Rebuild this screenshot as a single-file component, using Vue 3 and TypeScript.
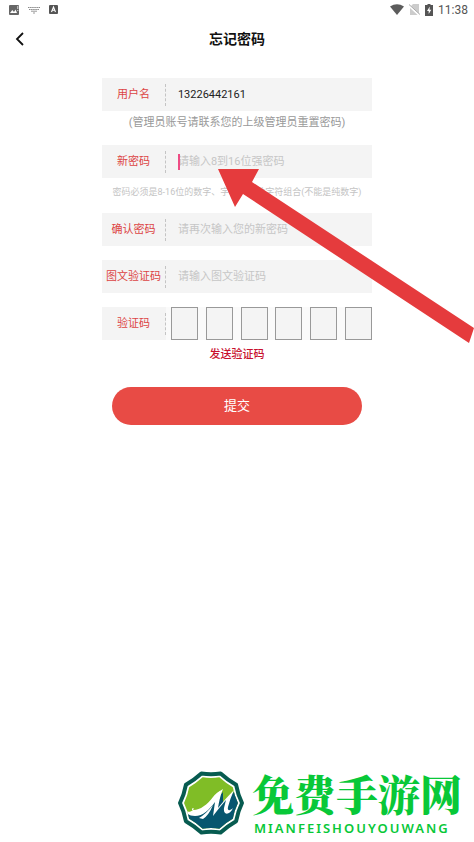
<script setup lang="ts">
import { ref } from 'vue'

interface Field {
  id: string
  label: string
  type: string
  placeholder: string
  hint?: string
  hintClass?: string
  caret?: boolean
}

const fields: Field[] = [
  { id: 'username', label: '用户名', type: 'text', placeholder: '', hint: '(管理员账号请联系您的上级管理员重置密码)', hintClass: 'note' },
  { id: 'password', label: '新密码', type: 'password', placeholder: '请输入8到16位强密码', hint: '密码必须是8-16位的数字、字母、特殊字符组合(不能是纯数字)', hintClass: 'rule', caret: true },
  { id: 'confirm', label: '确认密码', type: 'password', placeholder: '请再次输入您的新密码' },
  { id: 'captcha', label: '图文验证码', type: 'text', placeholder: '请输入图文验证码' },
]

const values = ref<Record<string, string>>({ username: '13226442161', password: '', confirm: '', captcha: '' })
const code = ref<string[]>(['', '', '', '', '', ''])
</script>

<template>
  <div class="page">
    <div class="status">
      <div class="status-side">
        <svg width="10" height="10" viewBox="0 0 10 10"><rect width="10" height="10" rx="1" fill="#666" /><path d="M1 8 3.300 5 5 7 6.500 4.500 8 8Z" fill="#fff" /><path d="M8.800 1v3M8.800 5v1" stroke="#fff" stroke-width=".8" /></svg>
        <svg width="12" height="8" viewBox="0 0 12 8"><path d="M0 1.500h12M1 3.500h10" stroke="#888" stroke-width="1.200" stroke-dasharray="1.500 .6" /><path d="M3 5.200h6M5 7h2" stroke="#999" /></svg>
        <svg width="9" height="9" viewBox="0 0 9 9"><rect width="9" height="9" rx="1" fill="#555" /><path d="M2.500 7 4.500 2l2 5M3.300 5.300h2.400" fill="none" stroke="#fff" stroke-width="1.100" /></svg>
      </div>
      <div class="status-side right">
        <svg width="14" height="11" viewBox="0 0 14 11"><path d="M0 2.500Q7-2.200 14 2.500L7 11Z" fill="#5c5c5c" /></svg>
        <svg width="11" height="11" viewBox="0 0 11 11"><path d="M4 0H10v11H1V3Z" fill="#ccc" /><path d="M0 1.500 10 11" stroke="#fff" stroke-width="2" /><path d="M0 .5 11 10.500" stroke="#aaa" /></svg>
        <svg width="8" height="12" viewBox="0 0 8 12"><path d="M2.500 0h3v1H8v11H0V1h2.500Z" fill="#555" /><path d="M4.800 2.500 2 7h1.700v3L6.300 5.800H4.500Z" fill="#fff" /></svg>
        <span class="clock">11:38</span>
      </div>
    </div>

    <header class="header">
      <button class="back" type="button" aria-label="返回">
        <svg width="9" height="14" viewBox="0 0 9 14"><path d="M8 1 2 7l6 6" fill="none" stroke="#111" stroke-width="1.800" /></svg>
      </button>
      <h1 class="title">忘记密码</h1>
    </header>

    <form class="form" @submit.prevent>
      <div v-for="f in fields" :key="f.id" class="group">
        <div class="row">
          <label class="label" :for="f.id">{{ f.label }}</label>
          <div class="control" :class="{ caret: f.caret }">
            <input :id="f.id" v-model="values[f.id]" class="input" :type="f.type" :placeholder="f.placeholder" />
          </div>
        </div>
        <p v-if="f.hint" class="hint" :class="f.hintClass">{{ f.hint }}</p>
      </div>

      <div class="row code-row">
        <label class="label" for="code-0">验证码</label>
        <div class="code">
          <input v-for="(_, i) in code" :id="`code-${i}`" :key="i" v-model="code[i]" class="digit" type="text" maxlength="1" :aria-label="`验证码 ${i + 1}`" />
        </div>
      </div>
      <button class="send" type="button">发送验证码</button>
      <button class="submit" type="submit">提交</button>
    </form>

    <svg class="pointer" width="256" height="174" viewBox="0 0 256 174" aria-hidden="true">
      <path d="M0 0H41L34 13 256 159 251 174 25 25 17 38Z" fill="#e53b3d" />
    </svg>

    <footer class="brand">
      <svg class="emblem" width="68" height="66" viewBox="0 0 68 66" aria-hidden="true">
        <defs>
          <path id="badge" d="M24.400 3.500Q34 4.800 43.600 3.500Q50.700 10 59.100 14.800Q60.800 24.300 65 33Q60.800 41.700 59.100 51.200Q50.700 56 43.600 62.500Q34 61.200 24.400 62.500Q17.300 56 8.900 51.200Q7.200 41.700 3 33Q7.200 24.300 8.900 14.800Q17.300 10 24.400 3.500Z" />
          <clipPath id="inner"><use href="#badge" transform="translate(34 33) scale(.87) translate(-34 -33)" /></clipPath>
        </defs>
        <use href="#badge" fill="#fff" stroke="#075b50" stroke-width="4" stroke-linejoin="round" />
        <g clip-path="url(#inner)">
          <path d="M0 0H68V66H0Z" fill="#80bd26" />
          <path d="M8 43C20 48 32 40 46 22L46 32 57 22 68 24V66H8Z" fill="#07566f" />
          <path d="M7 39C9 42 13 43 16 40 18 38 15 37 15 40 22 41 30 35 36 27 40 22 43 21 46 19 43 26 42 32 41 38Q48 29 57 20 53 29 51 37C50 41 53 41 56 38 53 45 46 46 47 38L49 30Q42 38 36 46L38 32C32 40 26 46 18 46 12 46 8 43 7 39Z" fill="#fff" />
          <path d="M36 35Q32 45 26 49L22 48Q29 44 36 35Z" fill="#fff" />
        </g>
      </svg>
      <div class="brand-text">
        <strong class="brand-name">免费手游网</strong>
        <span class="brand-latin">MIANFEISHOUYOUWANG</span>
      </div>
    </footer>
  </div>
</template>

<style>
body {
  margin: 0;
  background: #fff;
}
</style>

<style scoped>
.page {
  position: relative;
  display: flex;
  flex-direction: column;
  box-sizing: border-box;
  min-height: 100vh;
  overflow: hidden;
  font-family: Roboto, "Noto Sans CJK SC", sans-serif;
  font-size: 11px;
  line-height: 16px;
}
.page * {
  box-sizing: border-box;
}
.status {
  display: flex;
  justify-content: space-between;
  align-items: center;
  height: 19px;
  padding: 0 6px 0 9px;
}
.status-side {
  display: flex;
  align-items: center;
  gap: 9px;
}
.status-side.right {
  gap: 5px;
}
.clock {
  font-size: 12px;
  color: #555;
}
.header {
  display: grid;
  grid-template-columns: 38px 1fr 38px;
  align-items: center;
  height: 40px;
}
button {
  border: 0;
  padding: 0;
  background: none;
  font: inherit;
  cursor: pointer;
}
.back {
  display: flex;
  justify-content: center;
}
.title {
  margin: 0;
  font-size: 14px;
  line-height: 20px;
  font-weight: 700;
  text-align: center;
  color: #111;
}
.form {
  display: flex;
  flex-direction: column;
  gap: 14px;
  width: 57%;
  margin: 19px auto 0;
}
.row {
  display: grid;
  grid-template-columns: 64px 1fr;
  align-items: center;
  height: 33px;
  padding-top: 1px;
  background: #f4f4f4;
}
.label {
  border-right: 1px dashed #c4c4c4;
  line-height: 22px;
  text-align: center;
  white-space: nowrap;
  color: #dc4444;
}
.control {
  position: relative;
  display: flex;
}
.control.caret::before {
  content: "";
  position: absolute;
  left: 12px;
  top: 0;
  width: 2px;
  height: 16px;
  background: #ee4c84;
}
.input {
  width: 100%;
  padding: 0 0 0 12px;
  border: 0;
  outline: 0;
  background: none;
  font: inherit;
  color: #222;
}
.input::placeholder {
  color: #c6c6c6;
  opacity: 1;
}
.hint {
  display: flex;
  justify-content: center;
  margin: 0;
  white-space: nowrap;
}
.note {
  padding-top: 4px;
  color: #999;
}
.rule {
  padding-top: 7px;
  font-size: 9px;
  line-height: 14px;
  color: #c4c4c4;
}
.code-row {
  padding-top: 0;
  background: linear-gradient(to right, #f4f4f4 64px, #fafafa 64px);
}
.code {
  display: flex;
  justify-content: space-between;
  padding-left: 5px;
}
.digit {
  width: 27px;
  height: 33px;
  padding: 0;
  border: 1px solid #999;
  border-radius: 0;
  outline: 0;
  background: #f4f4f4;
  text-align: center;
  font: inherit;
}
.send {
  align-self: center;
  margin-top: -7px;
  font-weight: 500;
  color: #c8102e;
}
.submit {
  height: 38px;
  margin: 10px 10px 0;
  border-radius: 19px;
  background: #e84b45;
  font-size: 13px;
  color: #fff;
}
.pointer {
  position: absolute;
  left: 218px;
  top: 169px;
  pointer-events: none;
}
.brand {
  display: flex;
  justify-content: flex-end;
  align-items: center;
  gap: 7px;
  margin-top: auto;
  padding: 0 12px 6px 0;
  color: #08c838;
}
.brand-text {
  display: flex;
  flex-direction: column;
  gap: 3px;
}
.brand-name {
  font-family: "Noto Serif CJK SC", "Noto Sans CJK SC", serif;
  font-size: 42px;
  line-height: 48px;
  font-weight: 900;
}
.brand-latin {
  padding-left: 2px;
  font-family: "Noto Sans", sans-serif;
  font-size: 13px;
  line-height: 16px;
  font-weight: 600;
  letter-spacing: 2px;
}
</style>
